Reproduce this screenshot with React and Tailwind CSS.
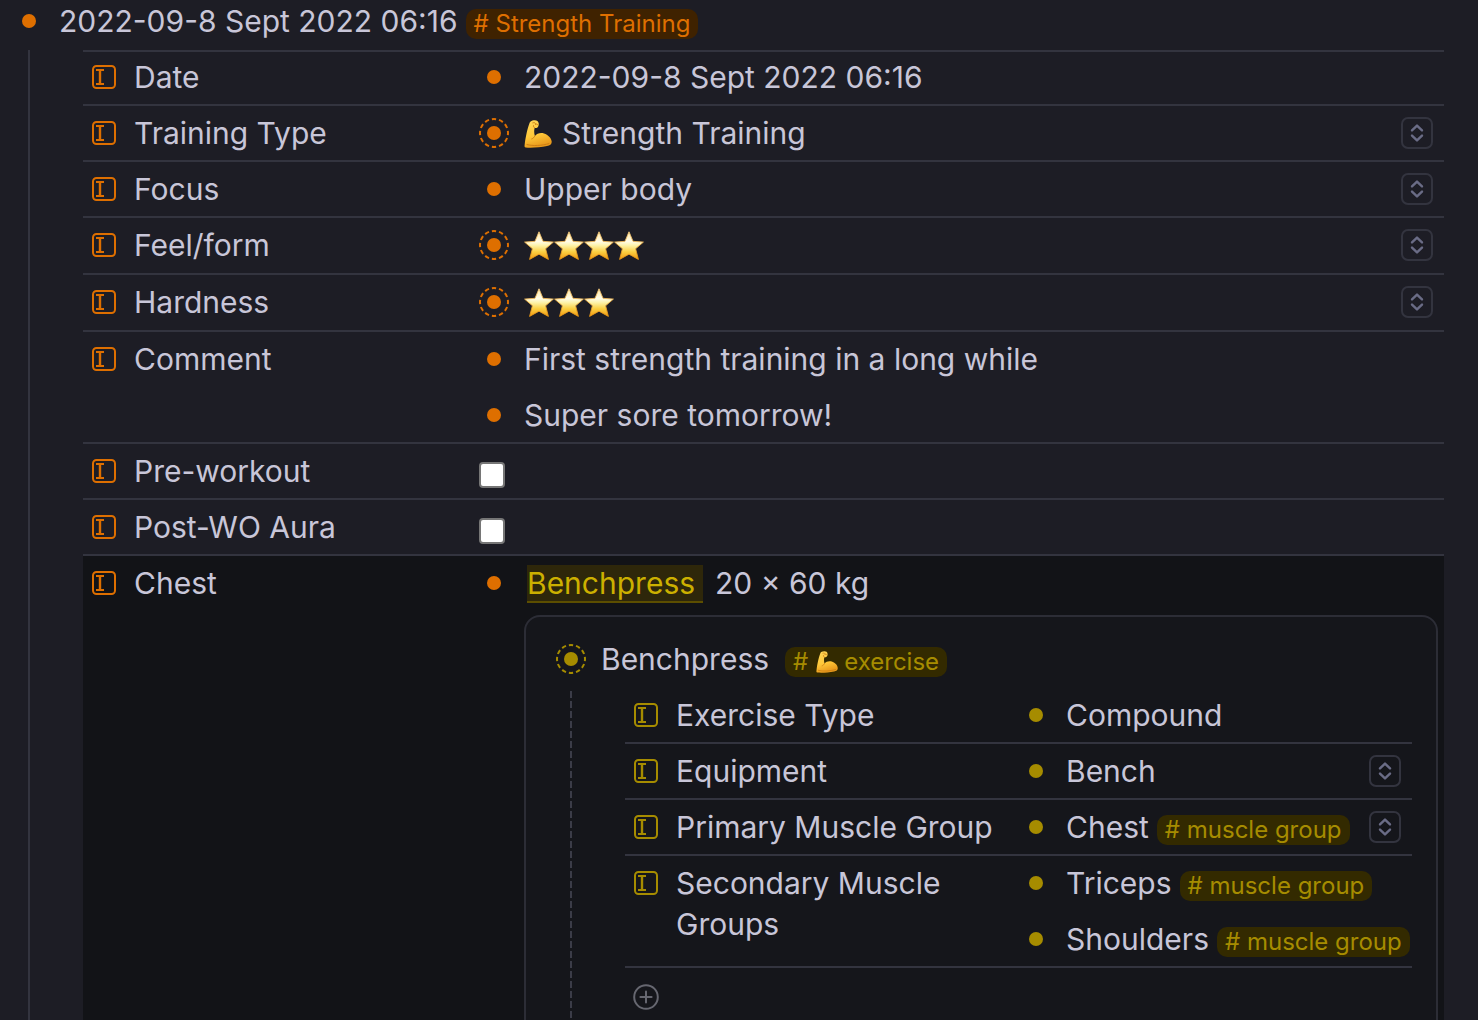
import React from "react";

const tones = {
  orange: { text: "text-[#de6f00]", tag: "bg-[#3f2200] text-[#de6f00]" },
  yellow: { text: "text-[#a68c00]", tag: "bg-[#332a00] text-[#a68c00]" },
};

function FieldIcon({ tone }) {
  return (
    <svg className={`my-2 size-6 shrink-0 ${tones[tone].text}`} viewBox="0 0 24 24" fill="none" stroke="currentColor" aria-hidden="true">
      <rect x="1" y="1" width="22" height="22" rx="3.5" strokeWidth="2" />
      <path d="M4 5H12M4 19H12" strokeWidth="2" />
      <path d="M8 5V19" strokeWidth="2.4" />
    </svg>
  );
}

function Bullet({ tone, ring }) {
  return (
    <svg className={`my-1 size-8 shrink-0 ${tones[tone].text}`} viewBox="0 0 32 32" aria-hidden="true">
      <circle cx="16" cy="16" r="7" fill="currentColor" />
      {ring && (
        <circle cx="16" cy="16" r="14" fill="none" stroke="currentColor" strokeWidth="2" pathLength="120" strokeDasharray="6 4" strokeDashoffset="3" />
      )}
    </svg>
  );
}

function Arm({ className }) {
  return (
    <svg className={className} viewBox="0 0 28 28" role="img" aria-label="flexed biceps">
      <defs>
        <linearGradient id="skin" x1="0" y1="0" x2="0.3" y2="1">
          <stop offset="0" stopColor="#ffd75a" />
          <stop offset="0.6" stopColor="#ffc93a" />
          <stop offset="1" stopColor="#e99a1c" />
        </linearGradient>
      </defs>
      <path d="M6.6 1.4C8.5 0 12-.2 13.4 .9C15 2.2 15.1 4.6 14.2 6.4C13.5 7.8 12 8.3 10.6 7.9C10 10.7 10 13.4 10.9 15.9C12.8 13.4 16.5 12.4 20 13.4C24 14.6 27.4 17.9 27.7 21.6C27.9 24.3 26 25.5 23 26C16 27.6 7 28 1.6 27.5C.6 27.3.4 26.5.6 25.2C1.4 17.5 3.4 8.5 5.2 3.9C5.5 2.9 5.9 2 6.6 1.4Z" fill="url(#skin)" />
      <path d="M10.9 15.9C10.1 17.5 9 18.5 7.8 18.9M10.6 7.9C9.7 7.4 9.2 6.5 9.5 5.6M8.8 2.8C10.4 2.2 11.8 2.8 11.6 4.2M11.6 4.2C12.5 3.7 13.5 4 13.7 4.8M3 24.6C9 26.2 18 25.7 25 23.6" fill="none" stroke="#c97a12" strokeWidth="0.9" strokeLinecap="round" />
    </svg>
  );
}

function Stars({ count }) {
  return (
    <span className="flex h-[42px] items-center" role="img" aria-label={`${count} stars`}>
      {Array.from({ length: count }, (_, i) => (
        <svg key={i} className="size-[30px]" viewBox="0 0 30 30">
          <defs>
            <linearGradient id="star" x1="0" y1="0" x2="0" y2="1">
              <stop offset="0" stopColor="#ffe9a8" />
              <stop offset="0.35" stopColor="#fffce8" />
              <stop offset="0.5" stopColor="#fdf2a8" />
              <stop offset="0.72" stopColor="#fbd043" />
              <stop offset="1" stopColor="#f09a10" />
            </linearGradient>
            <linearGradient id="starEdge" x1="0" y1="0" x2="0" y2="1">
              <stop offset="0" stopColor="#eec478" />
              <stop offset="1" stopColor="#e8940f" />
            </linearGradient>
          </defs>
          <path d="M15 0.8L19 10.3L29.4 11.1L21.6 17.8L24.4 28.4L15 23.2L5.6 28.4L8.4 17.8L.6 11.1L11 10.3Z" fill="url(#star)" stroke="url(#starEdge)" strokeWidth="0.9" strokeLinejoin="round" />
        </svg>
      ))}
    </span>
  );
}

function Tag({ tone, children }) {
  return (
    <a href="#tag" className={`ml-2 flex h-[30px] shrink-0 translate-y-0.5 items-center rounded-[10px] px-2 text-2xl whitespace-nowrap ${tones[tone].tag}`}>
      {children}
    </a>
  );
}

function OptionsButton({ label }) {
  return (
    <button type="button" aria-label={label} className="my-1 ml-auto flex size-8 shrink-0 items-center justify-center rounded-[7px] border-2 border-[#33343f] text-[#6a6c86]">
      <svg className="h-5 w-4" viewBox="0 0 16 20" fill="none" stroke="currentColor" strokeWidth="2.4" strokeLinecap="round" strokeLinejoin="round" aria-hidden="true">
        <path d="M3 7.4L8 2.6L13 7.4M3 12.6L8 17.4L13 12.6" />
      </svg>
    </button>
  );
}

function Value({ tone, ring, options, children }) {
  return (
    <div className="flex min-h-14 items-start pt-[7px] pb-2">
      <Bullet tone={tone} ring={ring} />
      <div className="ml-3.5 flex items-center">{children}</div>
      {options && <OptionsButton label={options} />}
    </div>
  );
}

function Field({ tone, name, first, children }) {
  return (
    <div className={`flex border-b-2 border-[#33343f] pl-[9px] ${first ? "-mt-0.5" : ""}`}>
      <div className="flex w-[386px] shrink-0 items-start pt-[7px]">
        <FieldIcon tone={tone} />
        <div className="ml-[18px]">{name}</div>
      </div>
      <div className="-mb-0.5 min-w-0 flex-1 pr-[11px]">{children}</div>
    </div>
  );
}

function CheckField({ name, id }) {
  return (
    <div className="flex border-b-2 border-[#33343f] pt-[7px] pb-1.5 pl-[9px]">
      <label htmlFor={id} className="flex w-[387px] shrink-0 items-start">
        <FieldIcon tone="orange" />
        <span className="ml-[18px]">{name}</span>
      </label>
      <input id={id} type="checkbox" className="mt-[11px] size-[26px] appearance-none rounded border-2 border-[#767676] bg-white checked:bg-[#de6f00]" />
    </div>
  );
}

export default function App() {
  return (
    <main className="flex h-screen flex-col overflow-hidden bg-[#1d1d25] font-['Inter',sans-serif] text-[30px] leading-[41px] font-normal text-[#c8c6d8]">
      <header className="flex h-[50px] shrink-0 items-start pt-px pl-[13px]">
        <Bullet tone="orange" />
        <h1 className="ml-[14px]">2022-09-8 Sept 2022 06:16</h1>
        <span className="pt-1.5"><Tag tone="orange"># Strength Training</Tag></span>
      </header>
      <div className="ml-7 flex min-h-0 flex-1 border-l-2 border-[#33343f] pr-[34px] pl-[53px]">
        <div className="min-w-0 flex-1">
          <div className="border-t-2 border-[#33343f]">
            <Field tone="orange" name="Date" first>
              <Value tone="orange">2022-09-8 Sept 2022 06:16</Value>
            </Field>
            <Field tone="orange" name="Training Type">
              <Value tone="orange" ring options="Choose training type">
                <Arm className="mr-2.5 size-7" />
                Strength Training
              </Value>
            </Field>
            <Field tone="orange" name="Focus">
              <Value tone="orange" options="Choose focus">Upper body</Value>
            </Field>
            <Field tone="orange" name="Feel/form">
              <Value tone="orange" ring options="Choose feel"><Stars count={4} /></Value>
            </Field>
            <Field tone="orange" name="Hardness">
              <Value tone="orange" ring options="Choose hardness"><Stars count={3} /></Value>
            </Field>
            <Field tone="orange" name="Comment">
              <Value tone="orange">First strength training in a long while</Value>
              <Value tone="orange">Super sore tomorrow!</Value>
            </Field>
            <CheckField name="Pre-workout" id="pre" />
            <CheckField name="Post-WO Aura" id="post" />
          </div>
          <div className="flex bg-[#121317] pr-1.5 pl-[9px]">
            <div className="flex w-[386px] shrink-0 items-start pt-[7px]">
              <FieldIcon tone="orange" />
              <div className="ml-[18px]">Chest</div>
            </div>
            <div className="min-w-0 flex-1">
              <div className="flex items-start pt-[7px]">
                <Bullet tone="orange" />
                <div className="ml-[17px] flex items-start">
                  <a href="#benchpress" className="mt-0.5 h-[38px] border-b-2 border-[#5c4e00] bg-[#2e270a] pr-2 leading-[37px] text-[#ccb000]">Benchpress</a>
                  <span className="ml-3">20 × 60 kg</span>
                </div>
              </div>
              <section className="mt-[11px] ml-[46px] rounded-2xl border-2 border-[#2c2d36] bg-[#15161b] pt-[15px] pr-6 pl-[29px]">
                <div className="flex items-start pt-[7px] pb-2">
                  <Bullet tone="yellow" ring />
                  <h2 className="ml-[14px]">Benchpress</h2>
                  <span className="ml-2 pt-1.5">
                    <Tag tone="yellow">#<Arm className="mr-1.5 ml-2 size-[22px]" />exercise</Tag>
                  </span>
                </div>
                <div className="flex">
                  <div className="mt-[3px] ml-[15px] w-0.5 shrink-0 bg-[repeating-linear-gradient(to_bottom,#3b3c48_0_7px,transparent_7px_10px)]" />
                  <div className="ml-[53px] min-w-0 flex-1 pb-16">
                    <Field tone="yellow" name="Exercise Type">
                      <Value tone="yellow">Compound</Value>
                    </Field>
                    <Field tone="yellow" name="Equipment">
                      <Value tone="yellow" options="Choose equipment">Bench</Value>
                    </Field>
                    <Field tone="yellow" name="Primary Muscle Group">
                      <Value tone="yellow" options="Choose primary muscle group">
                        Chest<Tag tone="yellow"># muscle group</Tag>
                      </Value>
                    </Field>
                    <Field tone="yellow" name="Secondary Muscle Groups">
                      <Value tone="yellow">Triceps<Tag tone="yellow"># muscle group</Tag></Value>
                      <Value tone="yellow">Shoulders<Tag tone="yellow"># muscle group</Tag></Value>
                    </Field>
                    <button type="button" aria-label="Add field" className="mt-4 ml-2 block size-[26px] text-[#666770]">
                      <svg className="size-full" viewBox="0 0 26 26" fill="none" stroke="currentColor" strokeWidth="2" strokeLinecap="round" aria-hidden="true">
                        <circle cx="13" cy="13" r="11.8" />
                        <path d="M13 7.4V18.6M7.4 13H18.6" />
                      </svg>
                    </button>
                  </div>
                </div>
              </section>
            </div>
          </div>
        </div>
      </div>
    </main>
  );
}
